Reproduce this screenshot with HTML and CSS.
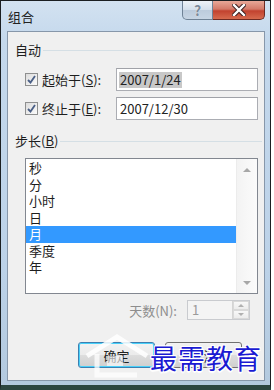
FILE: index.html
```html
<!DOCTYPE html>
<html>
<head>
<meta charset="UTF-8">
<title>组合</title>
<link rel="stylesheet" href="styles.css">
</head>
<body>
<div class="window">
  <div class="titlebar">
    <span class="title">组合</span>
    <div class="caption-btns">
      <a class="cap-help" href="javascript:;">?</a>
      <a class="cap-close" href="javascript:;">
        <svg width="14" height="12" viewBox="0 0 14 12"><path d="M2 1 L12 11 M12 1 L2 11" stroke="#3a2020" stroke-width="4.4" stroke-linecap="square"/><path d="M2 1 L12 11 M12 1 L2 11" stroke="#fff" stroke-width="2.4" stroke-linecap="square"/></svg>
      </a>
    </div>
  </div>

  <div class="client">
    <!-- 自动 -->
    <div class="group-head"><span>自动</span><i></i></div>
    <div class="row row-first">
      <label class="check"><span class="box"><svg width="11" height="11" viewBox="0 0 11 11"><path d="M2 6 L4.5 8.5 L9 2" fill="none" stroke="#4a5f86" stroke-width="1.8"/></svg></span>起始于(<u>S</u>):</label>
      <div class="textbox"><span class="sel">2007/1/24</span></div>
    </div>
    <div class="row">
      <label class="check"><span class="box"><svg width="11" height="11" viewBox="0 0 11 11"><path d="M2 6 L4.5 8.5 L9 2" fill="none" stroke="#4a5f86" stroke-width="1.8"/></svg></span>终止于(<u>E</u>):</label>
      <div class="textbox"><span>2007/12/30</span></div>
    </div>

    <!-- 步长 -->
    <div class="group-head group-step"><span>步长(<u>B</u>)</span><i></i></div>
    <div class="listbox">
      <ul class="items">
        <li>秒</li>
        <li>分</li>
        <li>小时</li>
        <li>日</li>
        <li class="active">月</li>
        <li>季度</li>
        <li>年</li>
      </ul>
      <div class="scroll">
        <span class="arr up"></span>
        <span class="arr down"></span>
      </div>
    </div>

    <div class="spin-row">
      <span class="dis">天数(N):</span>
      <div class="spin">
        <span class="val">1</span>
        <div class="spin-btns">
          <span><i class="tri-up"></i></span>
          <span><i class="tri-down"></i></span>
        </div>
      </div>
    </div>

    <div class="btn-row">
      <a class="btn btn-default" href="javascript:;">确定</a>
      <a class="btn" href="javascript:;">取消</a>
    </div>

    <!-- 水印 -->
    <svg class="wm-logo" width="70" height="44" viewBox="0 0 70 44">
      <path d="M4 22 L34 3 L64 22" fill="none" stroke="#fff" stroke-width="5" opacity=".85"/>
      <path d="M14 20 L14 41 L54 41" fill="none" stroke="#fff" stroke-width="5" opacity=".75"/>
      <rect x="24" y="22" width="16" height="10" fill="#fff" opacity=".6"/>
    </svg>
    <div class="wm-text">最需教育</div>
  </div>
</div>
</body>
</html>
```

FILE: styles.css
```css
body{
    margin:0;
    background:#fff;
    font-family:"Noto Sans CJK SC","Noto Sans",sans-serif;
    font-size:13px;
    color:#1e1e1e;
}
.window{
    width:271px;
    height:390px;
    padding:0 5px 4px 6px;
    box-sizing:border-box;
    border:1px solid #1b1f22;
    border-bottom:5px solid #2c4640;
    background:linear-gradient(#d3e2f1,#c4d8ec 40px,#bcd2e8 70%,#b3c9de);
    display:flex;
    flex-direction:column;
}
.titlebar{
    height:30px;
    display:flex;
    justify-content:space-between;
    flex-shrink:0;
}
.title{
    padding:7px 0 0 1px;
    line-height:17px;
    color:#222;
}
.caption-btns{
    display:flex;
    height:19px;
}
.caption-btns a{
    display:flex;
    align-items:center;
    justify-content:center;
    text-decoration:none;
    height:19px;
    box-sizing:border-box;
}
.cap-help{
    width:31px;
    border:1px solid #6f8296;
    border-top:none;
    border-radius:0 0 0 5px;
    background:linear-gradient(#eef3f8,#d3dfeb 50%,#bccbdc 51%,#c7d5e4);
    color:#7c8a9a;
    font-weight:bold;
    font-size:14px;
    text-shadow:0 0 1px #fff;
}
.cap-close{
    width:52px;
    border:1px solid #6e2a22;
    border-top:none;
    border-left:none;
    border-radius:0 0 5px 0;
    background:linear-gradient(#e8a898,#d47a69 45%,#c2422f 55%,#d66a4e);
}
.client{
    flex:1;
    position:relative;
    background:#f0f0f0;
    border:1px solid #8797aa;
    padding:0 6px 0 7px;
    overflow:hidden;
}
.group-head{
    display:flex;
    align-items:center;
    height:17px;
    margin-top:9px;
}
.group-head span{
    padding-right:2px;
}
.group-head i{
    flex:1;
    border-top:1px solid #d5dfe5;
    margin-top:1px;
    margin-right:-4px;
}
.row{
    display:flex;
    align-items:center;
    height:23px;
    margin-top:6px;
    padding-left:10px;
}
.row-first{
    margin-top:10px;
}
.check{
    display:flex;
    align-items:center;
    width:91px;
}
.check u,.group-head u{
    text-decoration:underline;
}
.box{
    width:13px;
    height:13px;
    box-sizing:border-box;
    border:1px solid #8e8f8f;
    background:linear-gradient(135deg,#dcdcdc,#fbfbfb);
    display:flex;
    align-items:center;
    justify-content:center;
    margin-right:4px;
}
.textbox{
    width:142px;
    height:23px;
    box-sizing:border-box;
    border:1px solid #abadb3;
    border-top-color:#a0a2a8;
    background:#fff;
    display:flex;
    align-items:center;
    padding-left:2px;
    color:#222;
}
.textbox span{
    line-height:16px;
    padding:0 1px;
}
.textbox .sel{
    background:#c8c8c8;
}
.group-step{
    margin-top:12px;
}
.listbox{
    display:flex;
    height:136px;
    box-sizing:border-box;
    margin:9px 0 0 10px;
    border:1px solid #828790;
    background:#fff;
}
.items{
    list-style:none;
    margin:0;
    padding:1px 0 0;
    flex:1;
}
.items li{
    height:16.5px;
    line-height:16.5px;
    padding-left:3px;
}
.items li.active{
    background:#3399ff;
    color:#fff;
}
.scroll{
    width:20px;
    display:flex;
    flex-direction:column;
    justify-content:space-between;
    align-items:center;
    padding:9px 0 8px;
    background:linear-gradient(90deg,#f3f3f3,#fbfbfb);
    border-left:1px solid #ececec;
}
.arr{
    width:0;
    height:0;
    border-left:4px solid transparent;
    border-right:4px solid transparent;
}
.arr.up{
    border-bottom:4px solid #a7a7a7;
}
.arr.down{
    border-top:4px solid #a7a7a7;
}
.spin-row{
    display:flex;
    justify-content:flex-end;
    align-items:center;
    margin-top:6px;
    padding-right:8px;
}
.dis{
    color:#8d8d8d;
    margin-right:10px;
}
.spin{
    width:63px;
    height:20px;
    box-sizing:border-box;
    border:1px solid #c9cbcf;
    background:#f4f4f4;
    display:flex;
    justify-content:space-between;
}
.val{
    color:#9a9a9a;
    padding-left:4px;
    line-height:18px;
}
.spin-btns{
    width:16px;
    display:flex;
    flex-direction:column;
    border-left:1px solid #d4d4d4;
}
.spin-btns span{
    flex:1;
    display:flex;
    align-items:center;
    justify-content:center;
    background:linear-gradient(#f8f8f8,#ececec);
    border:1px solid #d9d9d9;
}
.tri-up,.tri-down{
    width:0;
    height:0;
    border-left:3px solid transparent;
    border-right:3px solid transparent;
}
.tri-up{border-bottom:3px solid #b0b0b0;}
.tri-down{border-top:3px solid #b0b0b0;}
.btn-row{
    display:flex;
    justify-content:flex-end;
    gap:10px;
    margin-top:22px;
    padding-right:16px;
}
.btn{
    width:77px;
    height:26px;
    box-sizing:border-box;
    border:1px solid #707070;
    border-radius:3px;
    background:linear-gradient(#f2f2f2,#ebebeb 50%,#dddddd 51%,#cfcfcf);
    display:flex;
    align-items:center;
    justify-content:center;
    color:#222;
    text-decoration:none;
}
.btn-default{
    border-color:#3c7fb1;
    box-shadow:inset 0 0 0 1px #48d0f9;
}
.wm-logo{
    position:absolute;
    left:75px;
    top:302px;
}
.wm-text{
    position:absolute;
    left:142px;
    top:309px;
    font-size:27px;
    line-height:34px;
    letter-spacing:1px;
    color:#1a1ad2;
    text-shadow:1px 1px 0 #fff,-1px -1px 0 #fff,1px -1px 0 #fff,-1px 1px 0 #fff,0 2px 1px #fff;
}
```
